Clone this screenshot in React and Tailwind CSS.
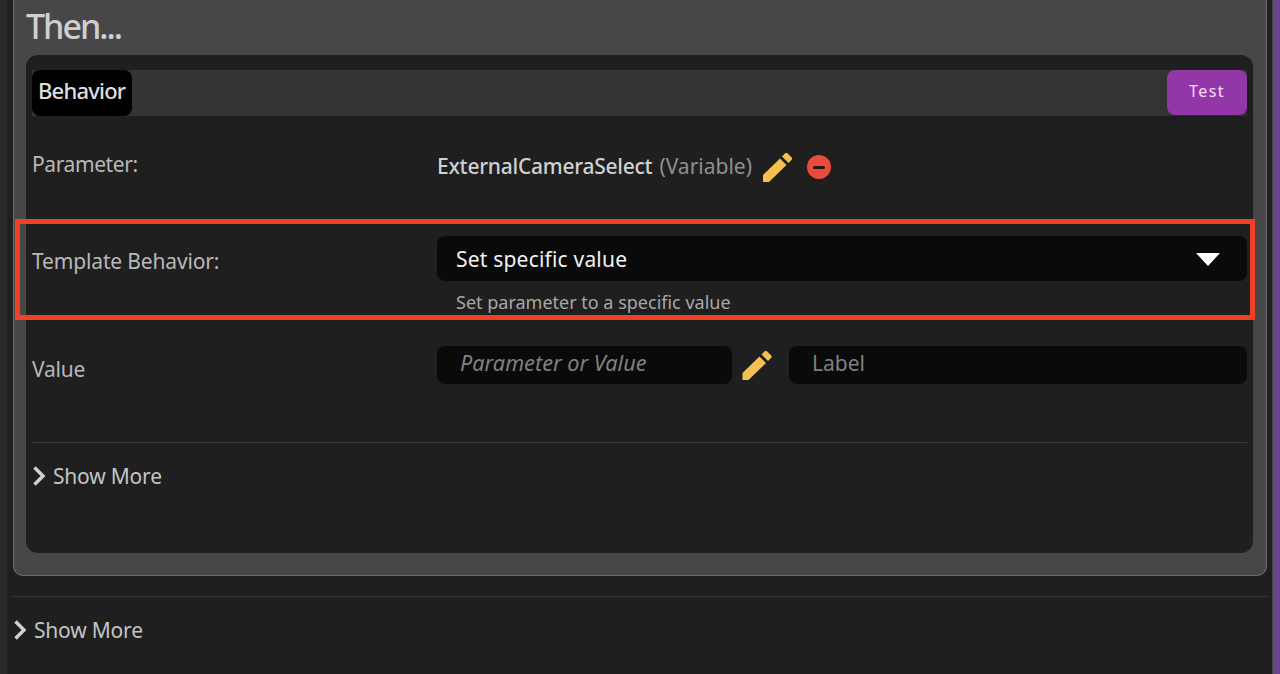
import React from "react";

const PencilIcon = ({ className }) => (
  <svg viewBox="0 0 30 30" className={className}>
    <path fill="#f5c04f" d="M0 30v-7L17 6.500l6.500 6.500L6 30z" />
    <path fill="#f5c04f" d="M19 4.500l3.200-3.200a1.600 1.600 0 0 1 2.200 0l4.300 4.300a1.600 1.600 0 0 1 0 2.200L25.500 11z" />
  </svg>
);

const Chevron = () => (
  <svg viewBox="0 0 14 20" className="h-[20px] w-[14px]">
    <path d="M2.500 1.500L11 10l-8.500 8.500" fill="none" stroke="#d0d0d0" strokeWidth="3.500" />
  </svg>
);

function ShowMore() {
  return (
    <div className="flex items-center gap-[7px] text-[21px] leading-[30px] tracking-[-0.2px] text-[#c4c4c4]">
      <Chevron />
      <span>Show More</span>
    </div>
  );
}

function App() {
  return (
    <div className="relative flex h-[674px] w-[1280px] overflow-hidden bg-[#1f1f1f] font-['Noto_Sans',sans-serif]">
      <div className="w-[7px] shrink-0 bg-[#2a2a2a]" />
      <div className="min-w-0 flex-1 pl-[6px] pr-[5px]">
        <div className="-mt-[1px] h-[577px] rounded-b-[10px] border border-t-0 border-[#6e6e6e] bg-[#474747] pl-[12px] pr-[13px]">
          <h2 className="h-[56px] pt-[5px] text-[34px] font-medium leading-[44px] tracking-[-2px] text-[#cfcfcf]">Then...</h2>
          <div className="h-[498px] rounded-xl bg-[#1f1f1f] px-[6px] pt-[15px]">
            <div className="flex h-[46px] bg-[#343434]">
              <div className="flex w-[100px] items-center rounded-lg bg-black pb-[6px] pl-[6px] text-[22px] font-medium tracking-[-0.8px] text-[#dedede]">Behavior</div>
              <div className="flex-1" />
              <button className="h-[45px] w-[80px] rounded-lg bg-[#9336a8] pb-[4px] text-[16px] tracking-[1.5px] text-[#f0e0f4] shadow-md">Test</button>
            </div>

            <div className="grid h-[86px] grid-cols-[405px_1fr] pt-[34px] text-[#b8b8b8]">
              <div className="text-[21px] leading-[28px] tracking-[-0.4px]">Parameter:</div>
              <div className="flex h-[34px] items-center text-[21px]">
                <span className="font-medium tracking-[-0.25px] text-[#d0d0d0]">ExternalCameraSelect</span>
                <span className="ml-[7px] text-[#8f8f8f]">(Variable)</span>
                <PencilIcon className="ml-[11px] h-[30px] w-[30px]" />
                <span className="ml-[14px] flex h-[24px] w-[24px] items-center justify-center rounded-full bg-[#e74c3c]">
                  <span className="h-[3px] w-[12px] rounded-sm bg-[#2a1512]" />
                </span>
              </div>
            </div>

            <div className="grid grid-cols-[405px_1fr] pt-[34px] text-[#b8b8b8]">
              <div className="pt-[11px] text-[21px] leading-[28px] tracking-[-0.15px]">Template Behavior:</div>
              <div>
                <div className="flex h-[45px] items-center justify-between rounded-lg bg-[#0a0a0a] pl-[19px] pr-[27px] pt-[2px] text-[21px] tracking-[0.2px] text-[#f2f2f2]">
                  <span>Set specific value</span>
                  <span className="h-0 w-0 border-x-[12px] border-t-[13px] border-x-transparent border-t-white" />
                </div>
                <p className="pl-[19px] pt-[8px] text-[18px] leading-[26px] text-[#a8a8a8]">Set parameter to a specific value</p>
              </div>
            </div>

            <div className="grid grid-cols-[405px_1fr] pt-[30px] text-[#b8b8b8]">
              <div className="pt-[8px] text-[21px] leading-[32px] tracking-[-0.2px]">Value</div>
              <div className="flex items-center">
                <div className="flex h-[38px] w-[295px] items-center rounded-lg bg-[#0a0a0a] pb-[3px] pl-[23px] text-[21.700px] italic text-[#808080]">Parameter or Value</div>
                <PencilIcon className="ml-[10px] mr-[16px] h-[30px] w-[31px]" />
                <div className="flex h-[38px] flex-1 items-center rounded-lg bg-[#0a0a0a] pb-[2px] pl-[23px] text-[21px] text-[#808080]">Label</div>
              </div>
            </div>

            <div className="mt-[57px] border-t border-[#3a3a3a] pt-[18px]">
              <ShowMore />
            </div>
          </div>
        </div>
        <div className="mt-[20px] border-t border-[#3a3a3a] pt-[18px]">
          <ShowMore />
        </div>
      </div>
      <div className="w-[8px] shrink-0 border-l border-[#444] bg-[#65468c]" />
      <div className="absolute left-[15px] top-[219px] h-[101px] w-[1240px] border-[5px] border-[#f04124]" />
    </div>
  );
}

export default App;
